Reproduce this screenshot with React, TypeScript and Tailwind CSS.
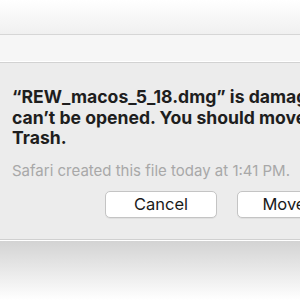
import React from 'react';

export default function App() {
  return (
    <div className="w-[300px] h-[300px] overflow-hidden bg-white font-['Inter','Liberation_Sans',sans-serif]">
      {/* Window title area */}
      <div className="h-[35px] bg-gradient-to-b from-white to-[#f0f0f0] border-b border-[#d6d6d6]" />
      <div className="h-[27px] bg-[#f6f6f6] border-b border-white" />

      {/* Sheet */}
      <div className="w-[440px] border-t border-[#d2d2d2] border-b border-b-[#d0d0d0] bg-[#ececec] pl-3 pt-[24px] pb-[21px]">
        <div className="text-[17.6px] leading-[20.5px] font-bold text-[#1e1e1e] whitespace-nowrap">
          <p>“REW_macos_5_18.dmg” is damaged and</p>
          <p>can’t be opened. You should move it to the</p>
          <p>Trash.</p>
        </div>
        <p className="mt-[13px] text-[15px] leading-[18px] text-[#a8a8a8] whitespace-nowrap">
          Safari created this file today at 1:41 PM.
        </p>
        <div className="mt-[11px] flex gap-[20px] pl-[93px]">
          <button className="w-[112px] h-[27px] rounded-[5px] bg-white border border-[#c4c4c4] text-[16.5px] text-[#1a1a1a] shadow-[0_1px_0_rgba(0,0,0,0.05)]">
            Cancel
          </button>
          <button className="w-[162px] h-[27px] rounded-[5px] bg-white border border-[#c4c4c4] text-[16.5px] text-[#1a1a1a] shadow-[0_1px_0_rgba(0,0,0,0.05)]">
            Move to Trash
          </button>
        </div>
      </div>

      {/* Shadow below sheet */}
      <div className="h-[60px] bg-gradient-to-b from-[#d3d3d3] to-white border-t border-white" />
    </div>
  );
}
